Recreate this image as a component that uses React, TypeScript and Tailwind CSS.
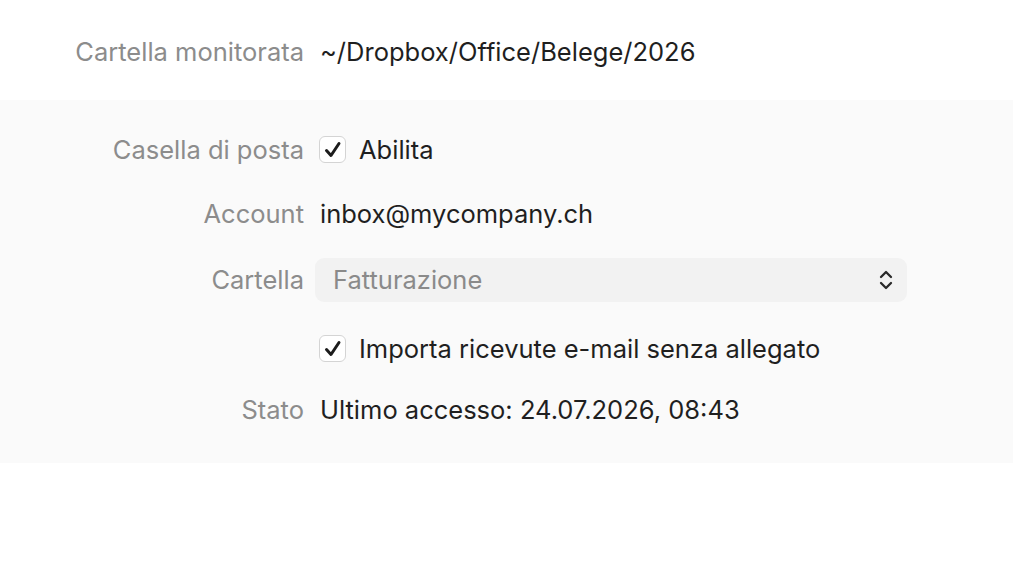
function Check() {
  return (
    <span className="flex h-[27px] w-[27px] shrink-0 items-center justify-center rounded-[6px] border border-[#d4d4d4] bg-white">
      <svg width="20" height="20" viewBox="0 0 20 20" fill="none">
        <path d="M3.5 10.5 L8 15.5 L16 3.5" stroke="#1c1c1c" strokeWidth="3" strokeLinecap="round" strokeLinejoin="round" />
      </svg>
    </span>
  )
}

function Row({ label, children, className = '' }: { label?: string; children: React.ReactNode; className?: string }) {
  return (
    <div className={`flex h-[44px] items-center ${className}`}>
      <div className="w-[304px] shrink-0 text-right text-[#8c8c8c]">{label}</div>
      <div className="ml-[16px] flex min-w-0 flex-1 items-center">{children}</div>
    </div>
  )
}

export default function App() {
  return (
    <div className="h-[570px] w-full bg-white text-[25.5px] leading-[1.3] text-[#1f1f1f]" style={{ fontFamily: 'Inter, "Liberation Sans", sans-serif' }}>
      <div className="pt-[30px]">
        <Row label="Cartella monitorata">~/Dropbox/Office/Belege/2026</Row>
      </div>

      <div className="mt-[26px] bg-[#fafafa] pt-[28px] pb-[31px]">
        <Row label="Casella di posta">
          <div className="-ml-[1px] flex items-center gap-[13px]">
            <Check />
            <span>Abilita</span>
          </div>
        </Row>

        <Row label="Account" className="mt-[20px]">
          inbox@mycompany.ch
        </Row>

        <Row label="Cartella" className="mt-[22px]">
          <div className="-ml-[5px] mr-[106px] flex h-[44px] flex-1 items-center justify-between rounded-[9px] bg-[#f2f2f2] pl-[18px] pr-[13px] text-[#8a8a8a]">
            <span>Fatturazione</span>
            <svg width="16" height="22" viewBox="0 0 16 22" fill="none">
              <path d="M3 8 L8 3 L13 8" stroke="#2a2a2a" strokeWidth="2.3" strokeLinecap="round" strokeLinejoin="round" />
              <path d="M3 14 L8 19 L13 14" stroke="#2a2a2a" strokeWidth="2.3" strokeLinecap="round" strokeLinejoin="round" />
            </svg>
          </div>
        </Row>

        <Row className="mt-[25px]">
          <div className="-ml-[1px] flex items-center gap-[13px]">
            <Check />
            <span>Importa ricevute e-mail senza allegato</span>
          </div>
        </Row>

        <Row label="Stato" className="mt-[17px]">
          Ultimo accesso: 24.07.2026, 08:43
        </Row>
      </div>
    </div>
  )
}
